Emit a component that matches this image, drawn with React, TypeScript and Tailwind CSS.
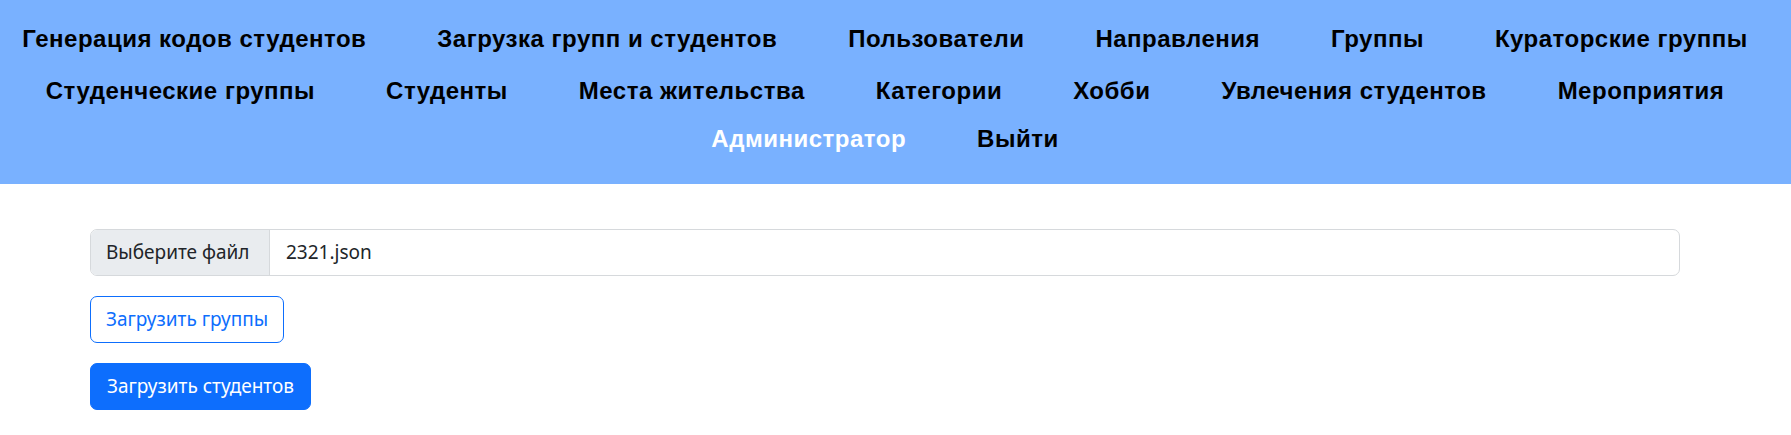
const navRows: string[][] = [
  ['Генерация кодов студентов', 'Загрузка групп и студентов', 'Пользователи', 'Направления', 'Группы', 'Кураторские группы'],
  ['Студенческие группы', 'Студенты', 'Места жительства', 'Категории', 'Хобби', 'Увлечения студентов', 'Мероприятия'],
  ['Администратор', 'Выйти'],
]

export default function App() {
  return (
    <div className="min-h-[435px] bg-white">
      {/* Header nav */}
      <nav className="h-[184px] bg-[#79b1ff] pt-[25px] pr-[21px] font-['Liberation_Sans',Arial,sans-serif] text-[24px] font-bold leading-[28px] tracking-[0.5px]">
        {navRows.map((row, i) => (
          <div
            key={i}
            className={`flex justify-center gap-x-[71px] ${i === 1 ? 'mt-[24px]' : i === 2 ? 'mt-[20px]' : ''}`}
          >
            {row.map((item) => (
              <a
                key={item}
                href="#"
                className={item === 'Администратор' ? 'text-white' : 'text-black'}
              >
                {item}
              </a>
            ))}
          </div>
        ))}
      </nav>

      {/* Upload form */}
      <div className="pl-[90px] pr-[111px] pt-[45px] font-['Noto_Sans',sans-serif] text-[19px] text-[#212529]">
        <div className="flex h-[47px] items-stretch overflow-hidden rounded-[7px] border border-[#d6d9dc]">
          <div className="flex w-[179px] items-center border-r border-[#d6d9dc] bg-[#e9ecef] px-[15px]">
            Выберите файл
          </div>
          <div className="flex items-center px-[16px]">2321.json</div>
        </div>

        <button className="mt-[20px] flex h-[47px] items-center rounded-[7px] border border-[#0d6efd] bg-white px-[15px] text-[#0d6efd]">
          Загрузить группы
        </button>

        <button className="mt-[20px] flex h-[47px] items-center rounded-[7px] border border-[#0d6efd] bg-[#0d6efd] px-[16px] text-white">
          Загрузить студентов
        </button>
      </div>
    </div>
  )
}
